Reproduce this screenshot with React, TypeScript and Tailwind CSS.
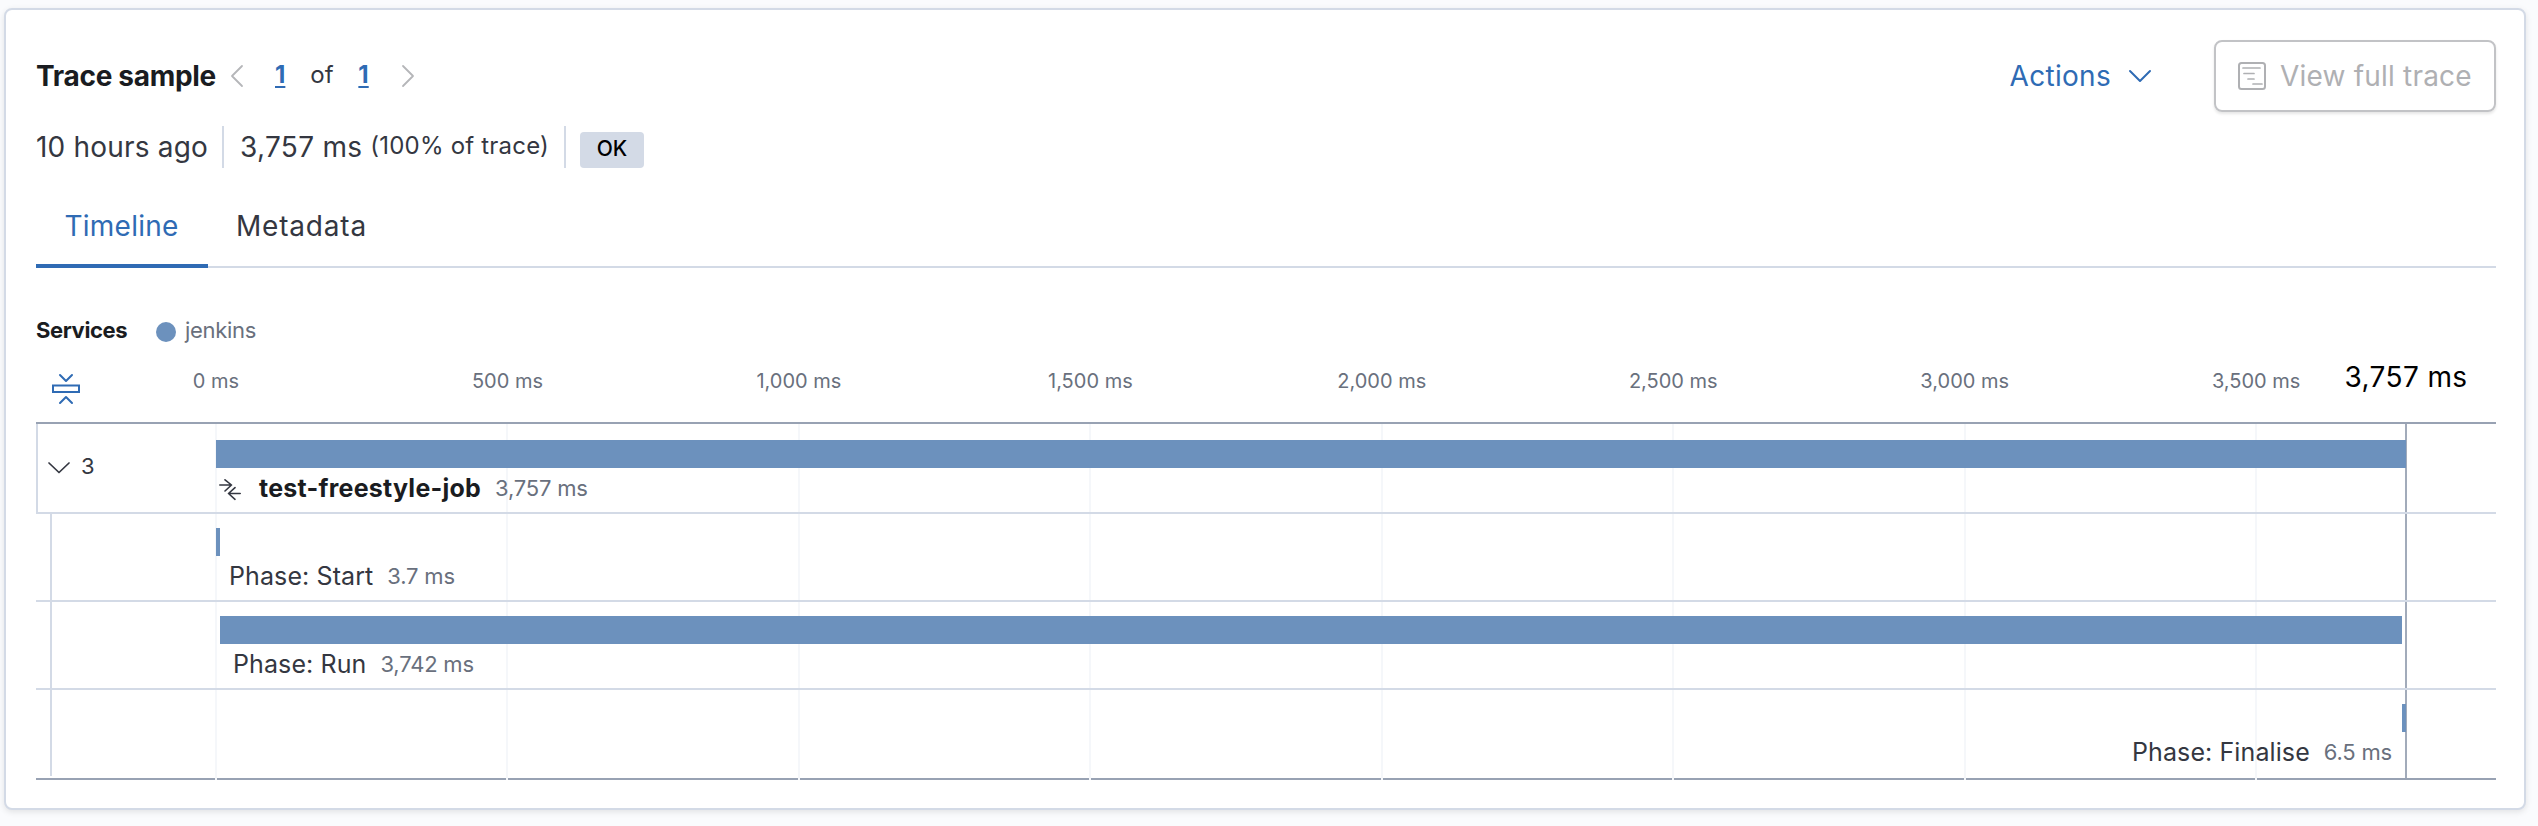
import type { ReactNode } from "react";

const TOTAL_MS = 3757;
const PX_PER_MS = 2190 / TOTAL_MS;
const TICKS = [0, 500, 1000, 1500, 2000, 2500, 3000, 3500];

interface Span {
  name: string;
  duration: string;
  start: number;
  width: number;
  alignEnd?: boolean;
}

const CHILDREN: Span[] = [
  { name: "Phase: Start", duration: "3.7 ms", start: 0, width: 4 },
  { name: "Phase: Run", duration: "3,742 ms", start: 4, width: 2182 },
  { name: "Phase: Finalise", duration: "6.5 ms", start: 2186, width: 4, alignEnd: true },
];

function tickWidth(ms: number) {
  return Math.min(500, TOTAL_MS - ms) * PX_PER_MS;
}

function Icon({ className, size, children }: { className: string; size: string; children: ReactNode }) {
  return (
    <svg viewBox={size} className={className} fill="none" stroke="currentColor" strokeWidth="2" strokeLinecap="round" strokeLinejoin="round">
      {children}
    </svg>
  );
}

function Header() {
  return (
    <div className="flex h-[72px] items-center whitespace-nowrap leading-none">
      <h2 className="w-[194px] text-[28px] font-bold tracking-[-0.3px] text-[#1a1c21]">Trace sample</h2>
      <div className="flex flex-1 items-center text-[24px]">
        <Icon size="0 0 14 24" className="h-6 w-[14px] text-[#b5b6b9]">
          <path d="M12 2 2 12l10 10" strokeWidth="1.8" />
        </Icon>
        <span className="ml-[31px] pb-[2px] font-bold text-[#2f6bb4] underline decoration-2 underline-offset-[3px]">1</span>
        <span className="ml-[25px] w-[24px] pb-[2px] text-[#343741]">of</span>
        <span className="ml-[24px] pb-[2px] font-bold text-[#2f6bb4] underline decoration-2 underline-offset-[3px]">1</span>
        <Icon size="0 0 14 24" className="ml-[32px] h-6 w-[14px] text-[#b5b6b9]">
          <path d="M2 2l10 10L2 22" strokeWidth="1.8" />
        </Icon>
      </div>
      <button className="mr-[62px] flex items-center text-[28px] tracking-[0.3px] text-[#2f6bb4]">
        Actions
        <Icon size="0 0 24 14" className="ml-[17px] h-[14px] w-6">
          <path d="M2 2l10 10L22 2" />
        </Icon>
      </button>
      <button className="flex h-[72px] w-[282px] items-center rounded-lg border-2 border-[#c2c3c6] pl-[22px] text-[28px] tracking-[0.2px] text-[#afb0b3] shadow-[0_2px_3px_rgba(0,0,0,0.1)]">
        <Icon size="0 0 28 28" className="h-7 w-7">
          <rect x="1" y="1" width="26" height="26" rx="2.5" />
          <path d="M5 6h17M6 11.5h10M10 17h6M15 22h9" strokeWidth="1.7" />
        </Icon>
        <span className="ml-[14px]">View full trace</span>
      </button>
    </div>
  );
}

function Summary() {
  return (
    <div className="mt-[14px] flex h-[42px] items-center whitespace-nowrap leading-none text-[#343741]">
      <span className="w-[186px] text-[28px] tracking-[0.2px]">10 hours ago</span>
      <span className="flex h-[42px] w-[342px] items-center border-l-2 border-[#d3dae6] pl-[16px] text-[28px] tracking-[0.3px]">
        3,757 ms
        <span className="ml-2 pb-[3px] text-[24px] tracking-[0.2px]">(100% of trace)</span>
      </span>
      <span className="flex h-[42px] items-end border-l-2 border-[#d3dae6] pl-[14px]">
        <span className="flex h-9 w-16 items-center justify-center rounded bg-[#d3dae6] pb-[4px] text-[21px] font-medium text-black">OK</span>
      </span>
    </div>
  );
}

function Tabs() {
  return (
    <div className="mt-[20px] flex h-[80px] text-[28px] leading-none shadow-[inset_0_-2px_0_#d3dae6]">
      <div className="flex w-[172px] items-center justify-center border-b-4 border-[#2f6bb4] pr-px tracking-[0.25px] text-[#2f6bb4]">Timeline</div>
      <div className="ml-[28px] flex items-center border-b-4 border-transparent tracking-[0.8px] text-[#343741]">Metadata</div>
    </div>
  );
}

function Legend() {
  return (
    <div className="mt-[48px] flex h-[28px] items-center text-[22px] leading-none">
      <span className="w-[120px] font-bold tracking-[-0.4px] text-[#1a1c21]">Services</span>
      <span className="mt-[4px] h-5 w-5 rounded-full bg-[#6c91bd]" />
      <span className="ml-[9px] tracking-[-0.3px] text-[#69707d]">jenkins</span>
    </div>
  );
}

function Axis() {
  return (
    <div className="flex h-[78px] whitespace-nowrap leading-none">
      <div className="w-[180px] pl-[16px] pt-[29px]">
        <Icon size="0 0 28 32" className="h-8 w-7 text-[#2f6bb4]">
          <path d="M8 2l6 6 6-6M8 30l6-6 6 6" />
          <rect x="1" y="12.5" width="26" height="6.5" strokeLinejoin="miter" />
        </Icon>
      </div>
      {TICKS.map((ms) => (
        <div key={ms} className="shrink-0 pt-[27px] text-[20px] text-[#69707d]" style={{ width: tickWidth(ms) }}>
          <div className="w-fit -translate-x-1/2">{ms.toLocaleString("en-US")} ms</div>
        </div>
      ))}
      <div className="w-0 pt-[19px] text-[28px] tracking-[0.4px] text-black">
        <div className="w-fit -translate-x-1/2">3,757 ms</div>
      </div>
    </div>
  );
}

function GridLines() {
  return (
    <div className="absolute -bottom-[2px] left-[179px] top-0 flex">
      {TICKS.map((ms) => (
        <div key={ms} className="shrink-0 border-l-2 border-[#f5f7fa]" style={{ width: tickWidth(ms) }} />
      ))}
      <div className="border-l-2 border-[#98a2b3]/90" />
    </div>
  );
}

function RootRow() {
  return (
    <div className="relative flex h-[90px] border-b-2 border-l-2 border-[#d3dae6] leading-none">
      <div className="flex w-[178px] items-center pl-[9px] pb-[4px] text-[22px] text-[#343741]">
        <Icon size="0 0 24 14" className="mt-[3px] h-[14px] w-6">
          <path d="M2 2l10 9.5L22 2" strokeWidth="1.7" />
        </Icon>
        <span className="ml-[10px]">3</span>
      </div>
      <div className="w-[2190px] pt-[16px]">
        <div className="h-[28px] bg-[#6c91bd]" />
        <div className="mt-[8px] flex items-start">
          <Icon size="0 0 22 22" className="ml-[3px] mt-[3px] h-[22px] w-[22px] text-[#343741]">
            <path d="M.8 6h11.7M6 .8 12.5 6 6 12M21.2 14.5H9.5M16 8.6l-6.5 5.9 6.5 5.8" strokeWidth="1.6" />
          </Icon>
          <span className="ml-[18px] text-[25px] font-bold tracking-[0.25px] text-[#1a1c21]">test-freestyle-job</span>
          <span className="ml-[14px] mt-[1px] text-[22px] tracking-[-0.2px] text-[#69707d]">3,757 ms</span>
        </div>
      </div>
    </div>
  );
}

function ChildRow({ span }: { span: Span }) {
  return (
    <div className="relative h-[88px] border-b-2 border-[#d3dae6] pl-[14px] leading-none last:border-transparent">
      <div className="h-full border-l-2 border-[#d3dae6] pl-[164px]">
        <div className="w-[2190px] pt-[14px]">
          <div className="h-[28px] bg-[#6c91bd]" style={{ marginLeft: span.start, width: span.width }} />
          <div
            className={span.alignEnd ? "mt-[8px] flex items-start justify-end pr-[14px]" : "mt-[8px] flex items-start pl-[13px]"}
            style={{ marginLeft: span.alignEnd ? 0 : span.start }}
          >
            <span className="text-[25px] tracking-[0.1px] text-[#343741]">{span.name}</span>
            <span className="ml-[14px] mt-[1px] text-[22px] tracking-[-0.2px] text-[#69707d]">{span.duration}</span>
          </div>
        </div>
      </div>
    </div>
  );
}

export default function App() {
  return (
    <div className="h-[826px] w-[2538px] overflow-hidden bg-[#fafbfd] pl-[4px] pt-2 font-['Inter',sans-serif]">
      <div className="h-[802px] w-[2522px] rounded-lg border-2 border-[#d3dae6] bg-white pl-[30px] pr-[28px] pt-[30px] shadow-[0_2px_6px_rgba(0,0,0,0.1)]">
        <Header />
        <Summary />
        <Tabs />
        <Legend />
        <Axis />
        <div className="relative border-y-2 border-[#98a2b3]">
          <GridLines />
          <RootRow />
          <div className="relative">
            {CHILDREN.map((span) => (
              <ChildRow key={span.name} span={span} />
            ))}
          </div>
        </div>
      </div>
    </div>
  );
}
